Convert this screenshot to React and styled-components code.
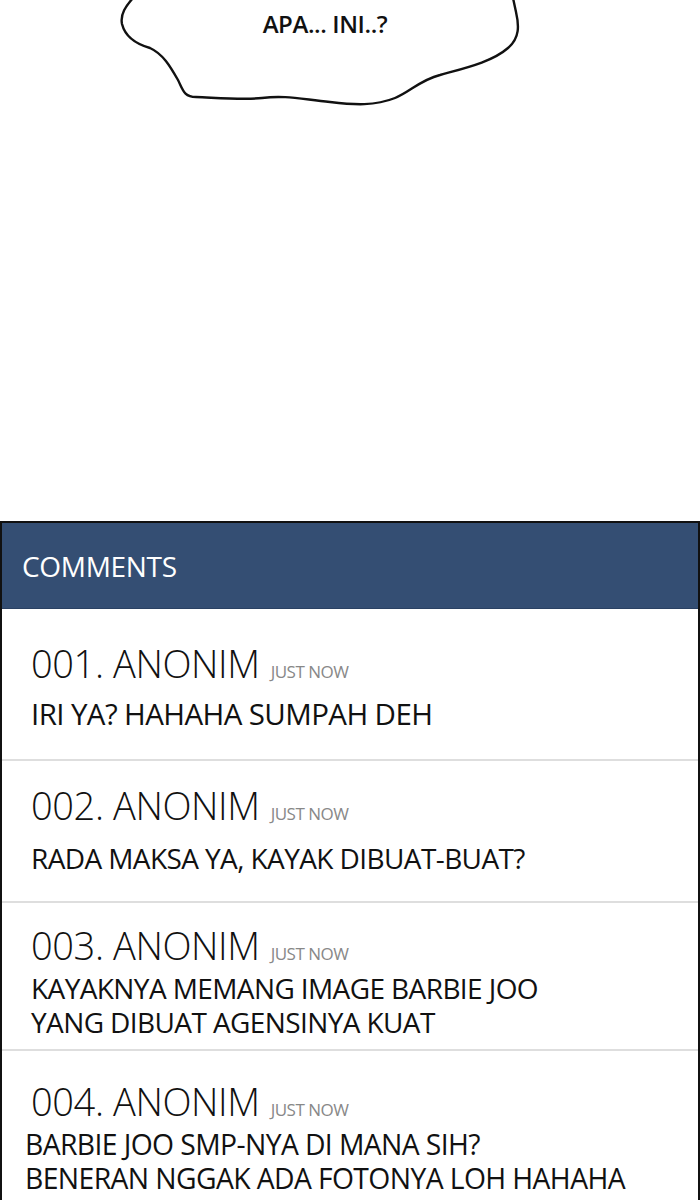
import React from "react";
import styled, { createGlobalStyle } from "styled-components";

const Global = createGlobalStyle`
  body {
    margin: 0;
    background: #fff;
    font-family: "Open Sans", "Noto Sans", sans-serif;
  }
`;

const Page = styled.div`
  width: 700px;
  height: 1200px;
  overflow: hidden;
  display: flex;
  flex-direction: column;
`;

const Scene = styled.div`
  height: 521px;
  flex: none;
`;

const Panel = styled.section`
  flex: 1;
  border: 2px solid #111;
  border-bottom: none;
  display: flex;
  flex-direction: column;
`;

const Header = styled.div`
  height: 85px;
  background: #344e73;
  border-bottom: 1px solid #2a4163;
  display: flex;
  align-items: center;
  padding-left: 20px;
  color: #fff;
  font-size: 28px;
  letter-spacing: -0.3px;
  font-weight: 400;
`;

const Item = styled.div`
  padding: ${(p) => p.$pad || "34px 0 28px 29px"};
  border-bottom: 2px solid #dedede;
`;

const Head = styled.div`
  display: flex;
  align-items: baseline;
  gap: 11px;
  color: #111;
  margin-bottom: ${(p) => p.$gap || 14}px;
`;

const Name = styled.span`
  font-size: 38px;
  font-weight: 300;
  letter-spacing: -0.4px;
  line-height: 40px;
`;

const Time = styled.span`
  font-size: 17px;
  color: #888;
  letter-spacing: -0.5px;
`;

const Body = styled.div`
  font-size: ${(p) => p.$size || 28}px;
  font-weight: 400;
  line-height: 34px;
  color: #111;
  letter-spacing: -0.6px;
  margin-left: ${(p) => p.$shift || 0}px;
`;

function Bubble() {
  return (
    <svg width="700" height="521" viewBox="0 0 700 521">
      <path
        d="M133 -2 C126 6 120 14 122 24 C125 36 136 44 150 48 C163 54 170 66 178 80 C183 90 184 97 196 97 C220 98 245 100 262 98 C285 95 300 99 330 102 C355 105 375 106 395 98 C410 92 420 80 440 75 C465 68 492 62 508 48 C520 38 519 25 516 12 L513 -2"
        fill="#fff"
        stroke="#111"
        strokeWidth="2.4"
        strokeLinejoin="round"
      />
      <text
        x="325"
        y="33"
        textAnchor="middle"
        fontFamily="'Open Sans', sans-serif"
        fontWeight="600"
        fontSize="24"
        fill="#111"
        letterSpacing="-0.4"
      >
        APA... INI..?
      </text>
    </svg>
  );
}

const comments = [
  { n: "001", lines: ["IRI YA? HAHAHA SUMPAH DEH"], gap: 14, pad: "34px 0 28px 29px", size: 29.5 },
  { n: "002", lines: ["RADA MAKSA YA, KAYAK DIBUAT-BUAT?"], gap: 16, pad: "24px 0 26px 29px" },
  { n: "003", lines: ["KAYAKNYA MEMANG IMAGE BARBIE JOO", "YANG DIBUAT AGENSINYA KUAT"], gap: 6, pad: "22px 0 10px 29px" },
  { n: "004", lines: ["BARBIE JOO SMP-NYA DI MANA SIH?", "BENERAN NGGAK ADA FOTONYA LOH HAHAHA"], gap: 6, pad: "30px 0 10px 29px", shift: -6, size: 28.3 },
];

export default function App() {
  return (
    <Page>
      <Global />
      <Scene>
        <Bubble />
      </Scene>
      <Panel>
        <Header>COMMENTS</Header>
        {comments.map((c) => (
          <Item key={c.n} $pad={c.pad}>
            <Head $gap={c.gap}>
              <Name>{c.n}. ANONIM</Name>
              <Time>JUST NOW</Time>
            </Head>
            <Body $shift={c.shift} $size={c.size}>
              {c.lines.map((l) => (
                <div key={l}>{l}</div>
              ))}
            </Body>
          </Item>
        ))}
      </Panel>
    </Page>
  );
}
